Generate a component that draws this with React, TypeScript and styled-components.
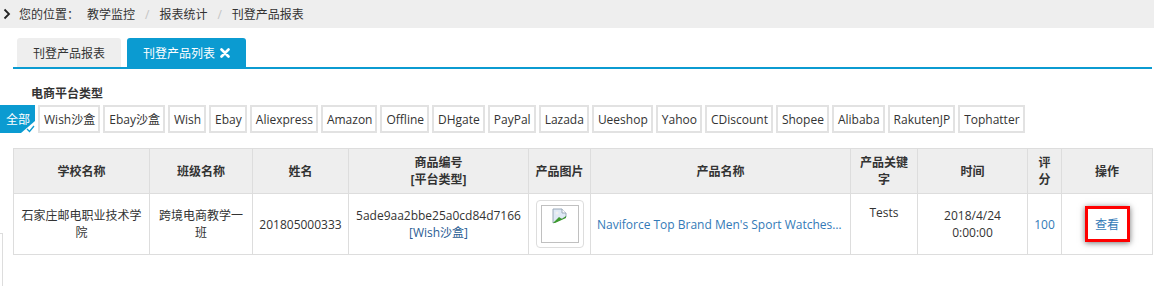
import styled, { createGlobalStyle } from "styled-components";

const GlobalStyle = createGlobalStyle`
  body {
    margin: 0;
    background: #fff;
    font-family: "Open Sans", "Noto Sans CJK SC", sans-serif;
    font-size: 12px;
    color: #333;
  }
`;

const BLUE = "#0b9bd1";
const LINK = "#337ab7";

const Breadcrumb = styled.div`
  height: 28px;
  background: #eeeeee;
  display: flex;
  align-items: center;
  padding-left: 3px;
  gap: 8px;
`;

const Crumb = styled.span`
  color: #333;
`;

const Sep = styled.span`
  color: #c4c4c4;
  margin: 0 2px;
`;

const Content = styled.div`
  padding: 10px 2px 0 13px;
`;

const TabBar = styled.div`
  display: flex;
  gap: 6px;
  padding-left: 4px;
  border-bottom: 2px solid ${BLUE};
`;

const Tab = styled.div<{ active?: boolean }>`
  height: 29px;
  display: flex;
  align-items: center;
  gap: 5px;
  padding: 0 16px;
  border-radius: 3px 3px 0 0;
  background: ${(p) => (p.active ? BLUE : "#eeeeee")};
  color: ${(p) => (p.active ? "#fff" : "#333")};
`;

const Label = styled.div`
  font-weight: bold;
  margin: 16px 0 0 18px;
  line-height: 17px;
`;

const FilterRow = styled.div`
  display: flex;
  gap: 3px;
  margin: 3px 0 0 -13px;
`;

const Filter = styled.div<{ active?: boolean }>`
  position: relative;
  height: 28px;
  box-sizing: border-box;
  display: flex;
  align-items: center;
  padding: 0 3px 0 4px;
  border: 2px solid ${(p) => (p.active ? BLUE : "#e2e2e2")};
  background: ${(p) => (p.active ? BLUE : "#fff")};
  color: ${(p) => (p.active ? "#fff" : "#333")};
  white-space: nowrap;
`;

const Corner = styled.svg`
  position: absolute;
  right: -2px;
  bottom: -2px;
`;

const TableArea = styled.div`
  display: flex;
  align-items: flex-start;
  margin: 15px 0 0 -13px;
`;

const Stub = styled.div`
  width: 2px;
  height: 52px;
  margin-top: 85px;
  border-top: 1px solid #ddd;
  border-right: 1px solid #ddd;
  flex-shrink: 0;
`;

const Table = styled.table`
  margin-left: 10px;
  width: 1139px;
  table-layout: fixed;
  border-collapse: collapse;
  line-height: 17px;
`;

const Th = styled.th<{ tight?: boolean }>`
  background: #eeeeee;
  border: 1px solid #dddddd;
  height: 45px;
  box-sizing: border-box;
  padding: ${(p) => (p.tight ? "0 3px" : "0 8px")};
  font-weight: bold;
  text-align: center;
  color: #333;
`;

const Td = styled.td<{ top?: boolean; tight?: boolean }>`
  border: 1px solid #dddddd;
  height: 61px;
  box-sizing: border-box;
  padding: ${(p) => (p.top ? "10px 8px 0" : p.tight ? "0 3px" : "0 5px")};
  text-align: center;
  vertical-align: ${(p) => (p.top ? "top" : "middle")};
  color: #333;
`;

const Link = styled.span`
  color: ${LINK};
`;

const Code = styled.div`
  white-space: nowrap;
`;

const Platform = styled.div`
  color: #2a5d93;
`;

const NameCell = styled.td`
  border: 1px solid #dddddd;
  padding: 0 6px;
  text-align: left;
  white-space: nowrap;
  overflow: hidden;
  text-overflow: ellipsis;
  color: ${LINK};
`;

const Thumb = styled.div`
  width: 48px;
  height: 48px;
  box-sizing: border-box;
  margin: 0 auto;
  padding: 4px;
  border: 1px solid #dddddd;
  border-radius: 4px;
`;

const ThumbInner = styled.div`
  width: 100%;
  height: 100%;
  box-sizing: border-box;
  border: 1px solid #c0c0c0;
  padding: 2px;
`;

const ViewButton = styled.span`
  display: inline-flex;
  align-items: center;
  justify-content: center;
  width: 45px;
  height: 36px;
  box-sizing: border-box;
  border: 3px solid #ff0000;
  box-shadow: 0 1px 6px rgba(0, 0, 0, 0.55);
  color: ${LINK};
`;

const platforms = [
  "Wish沙盒",
  "Ebay沙盒",
  "Wish",
  "Ebay",
  "Aliexpress",
  "Amazon",
  "Offline",
  "DHgate",
  "PayPal",
  "Lazada",
  "Ueeshop",
  "Yahoo",
  "CDiscount",
  "Shopee",
  "Alibaba",
  "RakutenJP",
  "Tophatter",
];

const widths = [136, 103, 96, 180, 62, 260, 67, 110, 34, 91];

function BrokenImage() {
  return (
    <svg width="16" height="16" viewBox="0 0 16 16">
      <path d="M1 1h9l4 4v4L1 15z" fill="#dfe9f5" stroke="#9aa8b8" strokeWidth="1" />
      <path d="M10 1v4h4" fill="#fff" stroke="#9aa8b8" strokeWidth="1" />
      <path d="M1 15l6-6 3 2 4-3v2L3 15z" fill="#3d9a2f" />
      <circle cx="5" cy="5" r="1.5" fill="#f0f0f0" />
    </svg>
  );
}

export default function App() {
  return (
    <>
      <GlobalStyle />
      <Breadcrumb>
        <svg width="8" height="12" viewBox="0 0 8 12">
          <path d="M1.5 1.5L6 6l-4.5 4.5" fill="none" stroke="#222" strokeWidth="1.8" />
        </svg>
        <Crumb>您的位置：</Crumb>
        <Crumb>教学监控</Crumb>
        <Sep>/</Sep>
        <Crumb>报表统计</Crumb>
        <Sep>/</Sep>
        <Crumb>刊登产品报表</Crumb>
      </Breadcrumb>
      <Content>
        <TabBar>
          <Tab>刊登产品报表</Tab>
          <Tab active>
            刊登产品列表
            <svg width="10" height="10" viewBox="0 0 10 10">
              <path d="M1.5 1.5l7 7M8.5 1.5l-7 7" stroke="#fff" strokeWidth="2.6" strokeLinecap="round" />
            </svg>
          </Tab>
        </TabBar>
        <Label>电商平台类型</Label>
        <FilterRow>
          <Filter active>
            全部
            <Corner width="14" height="12" viewBox="0 0 14 12">
              <path d="M14 0V12H0z" fill="#fff" />
              <path d="M6 8l2.5 2.5L13 5" fill="none" stroke={BLUE} strokeWidth="1.3" />
            </Corner>
          </Filter>
          {platforms.map((p) => (
            <Filter key={p}>{p}</Filter>
          ))}
        </FilterRow>
        <TableArea>
          <Stub />
          <Table>
            <colgroup>
              {widths.map((w, i) => (
                <col key={i} style={{ width: w }} />
              ))}
            </colgroup>
            <thead>
              <tr>
                <Th>学校名称</Th>
                <Th>班级名称</Th>
                <Th>姓名</Th>
                <Th>
                  商品编号
                  <br />
                  [平台类型]
                </Th>
                <Th tight>产品图片</Th>
                <Th>产品名称</Th>
                <Th>产品关键字</Th>
                <Th>时间</Th>
                <Th>评分</Th>
                <Th>操作</Th>
              </tr>
            </thead>
            <tbody>
              <tr>
                <Td>石家庄邮电职业技术学院</Td>
                <Td>跨境电商教学一班</Td>
                <Td>201805000333</Td>
                <Td tight>
                  <Code>5ade9aa2bbe25a0cd84d7166</Code>
                  <Platform>[Wish沙盒]</Platform>
                </Td>
                <Td tight>
                  <Thumb>
                    <ThumbInner>
                      <BrokenImage />
                    </ThumbInner>
                  </Thumb>
                </Td>
                <NameCell>Naviforce Top Brand Men's Sport Watches Luxury Quartz</NameCell>
                <Td top>Tests</Td>
                <Td>
                  2018/4/24
                  <br />
                  0:00:00
                </Td>
                <Td tight>
                  <Link>100</Link>
                </Td>
                <Td>
                  <ViewButton>查看</ViewButton>
                </Td>
              </tr>
            </tbody>
          </Table>
        </TableArea>
      </Content>
    </>
  );
}
